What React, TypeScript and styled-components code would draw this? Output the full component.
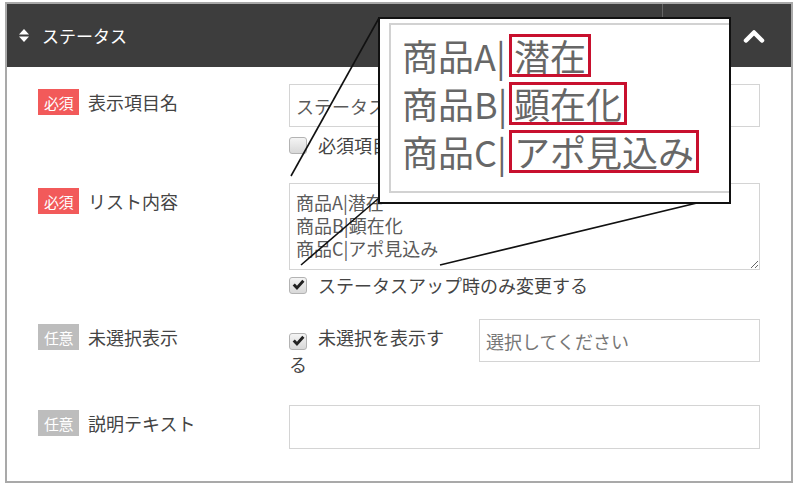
import React from 'react';
import styled, { createGlobalStyle } from 'styled-components';

const GlobalStyle = createGlobalStyle`
  html, body {
    margin: 0;
    padding: 0;
    background: #fff;
  }
  body {
    font-family: "Noto Sans CJK JP", "Noto Sans", sans-serif;
  }
`;

const Page = styled.div`
  position: relative;
  width: 800px;
  height: 491px;
  padding: 2px 0 0 5px;
  box-sizing: border-box;
  overflow: hidden;
`;

const Panel = styled.section`
  width: 788px;
  border: 2px solid #a9a9a9;
  box-sizing: border-box;
  background: #fff;
`;

const Header = styled.header`
  display: flex;
  align-items: center;
  height: 63px;
  background: #3d3d3d;
  color: #fff;
`;

const HeaderTitle = styled.div`
  display: flex;
  align-items: center;
  gap: 13px;
  padding-left: 12px;
  font-size: 17px;
`;

const HeaderActions = styled.div`
  margin-left: auto;
  height: 100%;
  width: 129px;
  box-sizing: border-box;
  border-left: 1px solid #666;
  display: flex;
  align-items: center;
  justify-content: flex-end;
  padding-right: 26px;
`;

const Body = styled.div`
  padding: 17px 31px 32px 31px;
`;

const Row = styled.div<{ $gap: number }>`
  display: grid;
  grid-template-columns: 251px 471px;
  padding-bottom: ${p => p.$gap}px;
`;

const LabelCell = styled.div`
  display: flex;
  align-items: center;
  gap: 9px;
  height: 26px;
  margin-top: 5px;
`;

const Badge = styled.span<{ $required?: boolean }>`
  display: flex;
  align-items: center;
  justify-content: center;
  width: 41px;
  height: 26px;
  background: ${p => (p.$required ? '#f25a5a' : '#bdbdbd')};
  color: #fff;
  font-size: 15px;
  letter-spacing: -0.5px;
`;

const LabelText = styled.span`
  font-size: 18px;
  color: #444;
`;

const FieldCell = styled.div`
  display: flex;
  flex-direction: column;
`;

const TextInput = styled.input<{ $h?: number }>`
  width: 100%;
  height: ${p => p.$h ?? 43}px;
  box-sizing: border-box;
  border: 1px solid #d4d4d4;
  padding: 0 6px;
  font-family: inherit;
  font-size: 18px;
  color: #5a5a5a;
  outline: none;
  &::placeholder {
    color: #777;
  }
`;

const TextArea = styled.textarea`
  width: 100%;
  height: 87px;
  box-sizing: border-box;
  border: 1px solid #d4d4d4;
  padding: 7px 6px;
  font-family: inherit;
  font-size: 18px;
  line-height: 23px;
  color: #5a5a5a;
  resize: vertical;
  outline: none;
`;

const CheckLine = styled.label<{ $mt: number }>`
  display: flex;
  align-items: center;
  gap: 11px;
  height: 22px;
  margin-top: ${p => p.$mt}px;
  font-size: 18px;
  color: #444;
`;

const CheckBox = styled.span`
  display: inline-flex;
  align-items: center;
  justify-content: center;
  width: 18px;
  height: 17px;
  box-sizing: border-box;
  border: 1px solid #b3b3b3;
  border-radius: 3px;
  background: linear-gradient(#f4f4f4, #d8d8d8);
  flex-shrink: 0;
`;

const OptionGroup = styled.div`
  display: grid;
  grid-template-columns: 170px 1fr;
  gap: 20px;
`;

const OptionText = styled.label`
  margin-top: 5px;
  line-height: 27px;
  font-size: 18px;
  color: #444;
  ${CheckBox} {
    vertical-align: -2px;
    margin-right: 11px;
  }
`;

const Magnifier = styled.div`
  position: absolute;
  left: 378px;
  top: 17px;
  width: 353px;
  height: 187px;
  box-sizing: border-box;
  border: 2px solid #111;
  background: #fff;
  overflow: hidden;
  padding: 4px 0 9px 9px;
`;

const ZoomField = styled.div`
  width: 400px;
  height: 100%;
  box-sizing: border-box;
  border: 2px solid #d2d2d2;
  border-right: none;
  padding: 9px 0 0 11px;
  display: flex;
  flex-direction: column;
  gap: 5px;
`;

const ZoomRow = styled.div`
  display: flex;
  align-items: center;
  height: 43px;
  font-size: 36px;
  line-height: 37px;
  color: #676767;
`;

const Prefix = styled.span`
  width: 107px;
  flex-shrink: 0;
  white-space: nowrap;
`;

const Highlight = styled.span`
  border: 3px solid #c8102e;
  padding: 0 2px;
  white-space: nowrap;
`;

const Connectors = styled.svg`
  position: absolute;
  left: 0;
  top: 0;
  pointer-events: none;
`;

const Check = () => (
  <svg width="13" height="12" viewBox="0 0 12 11">
    <path d="M0.6 5.9 L2.6 4 L4.6 6.2 L9.5 0.6 L11.5 2.4 L4.6 10.2 Z" fill="#222" />
  </svg>
);

const SortIcon = () => (
  <svg width="10" height="13" viewBox="0 0 10 13">
    <polygon points="0,5.5 5,0 10,5.5" fill="#fff" />
    <polygon points="0,7.5 5,13 10,7.5" fill="#fff" />
  </svg>
);

const ChevronUp = () => (
  <svg width="22" height="14" viewBox="0 0 22 14">
    <polyline points="3,11.5 11,3.5 19,11.5" fill="none" stroke="#fff" strokeWidth="4.5" strokeLinecap="round" strokeLinejoin="round" />
  </svg>
);

const zoomLines = [
  { prefix: '商品A|', value: '潜在' },
  { prefix: '商品B|', value: '顕在化' },
  { prefix: '商品C|', value: 'アポ見込み' },
];

export default function App() {
  return (
    <Page>
      <GlobalStyle />
      <Panel>
        <Header>
          <HeaderTitle>
            <SortIcon />
            <span>ステータス</span>
          </HeaderTitle>
          <HeaderActions>
            <ChevronUp />
          </HeaderActions>
        </Header>
        <Body>
          <Row $gap={27}>
            <LabelCell>
              <Badge $required>必須</Badge>
              <LabelText>表示項目名</LabelText>
            </LabelCell>
            <FieldCell>
              <TextInput defaultValue="ステータス" />
              <CheckLine $mt={7}>
                <CheckBox />
                必須項目にする
              </CheckLine>
            </FieldCell>
          </Row>
          <Row $gap={23}>
            <LabelCell>
              <Badge $required>必須</Badge>
              <LabelText>リスト内容</LabelText>
            </LabelCell>
            <FieldCell>
              <TextArea readOnly defaultValue={'商品A|潜在\n商品B|顕在化\n商品C|アポ見込み'} />
              <CheckLine $mt={4}>
                <CheckBox>
                  <Check />
                </CheckBox>
                ステータスアップ時のみ変更する
              </CheckLine>
            </FieldCell>
          </Row>
          <Row $gap={27}>
            <LabelCell>
              <Badge>任意</Badge>
              <LabelText>未選択表示</LabelText>
            </LabelCell>
            <OptionGroup>
              <OptionText>
                <CheckBox>
                  <Check />
                </CheckBox>
                未選択を表示する
              </OptionText>
              <TextInput placeholder="選択してください" />
            </OptionGroup>
          </Row>
          <Row $gap={0}>
            <LabelCell>
              <Badge>任意</Badge>
              <LabelText>説明テキスト</LabelText>
            </LabelCell>
            <FieldCell>
              <TextInput $h={44} />
            </FieldCell>
          </Row>
        </Body>
      </Panel>

      <Connectors width="800" height="491" viewBox="0 0 800 491">
        <line x1="379" y1="18" x2="291" y2="176" stroke="#111" strokeWidth="1.6" />
        <line x1="379" y1="198" x2="301" y2="265" stroke="#111" strokeWidth="1.6" />
        <line x1="730" y1="195" x2="440" y2="265" stroke="#111" strokeWidth="1.6" />
      </Connectors>

      <Magnifier>
        <ZoomField>
          {zoomLines.map(line => (
            <ZoomRow key={line.prefix}>
              <Prefix>{line.prefix}</Prefix>
              <Highlight>{line.value}</Highlight>
            </ZoomRow>
          ))}
        </ZoomField>
      </Magnifier>
    </Page>
  );
}
